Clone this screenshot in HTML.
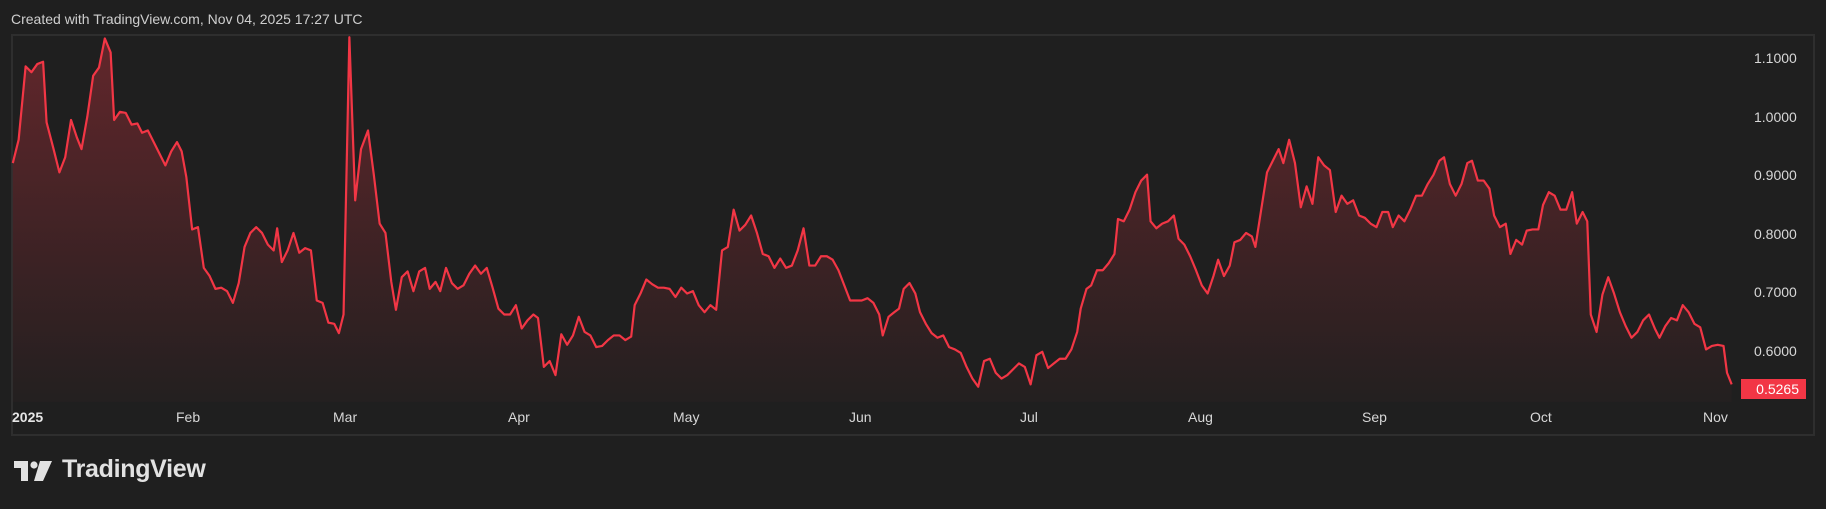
<!DOCTYPE html>
<html><head><meta charset="utf-8"><style>
html,body{margin:0;padding:0;background:#1f1f1f;}
body{width:1826px;height:509px;position:relative;overflow:hidden;font-family:"Liberation Sans",sans-serif;color:#d1d4dc;}
.t{position:absolute;white-space:nowrap;}
.hdr{left:11px;top:11px;font-size:14px;color:#cfcfcf;}
.frame{position:absolute;left:11px;top:34px;width:1800px;height:398px;border:2px solid #2e2e2e;}
.yl{position:absolute;left:1754px;font-size:14px;color:#d7d7d7;}
.xl{position:absolute;top:409px;font-size:14px;color:#d7d7d7;}
.price{position:absolute;left:1741px;top:379px;width:65px;height:20px;background:#f23645;color:#fff;font-size:14px;line-height:20px;text-align:right;box-sizing:border-box;padding-right:7px;}
.logo{position:absolute;left:62px;top:455px;font-size:25px;font-weight:bold;color:#e2e2e2;letter-spacing:-0.3px;}
</style></head><body>
<div class="t hdr">Created with TradingView.com, Nov 04, 2025 17:27 UTC</div>
<div class="frame"></div>
<svg style="position:absolute;left:0;top:0" width="1826" height="509" viewBox="0 0 1568 437" preserveAspectRatio="none">
<defs><linearGradient id="g" x1="0" y1="0" x2="0" y2="1"><stop offset="0" stop-color="#f23645" stop-opacity="0.32"/><stop offset="1" stop-color="#f23645" stop-opacity="0.02"/></linearGradient></defs>
<path id="p" fill="url(#g)" stroke="none" d="M11,345 L11,140 16,120 22,57 27,62 32,55 37,53 40,105 46,128 51,148 56,135 61,103 66,118 70,128 75,100 80,65 85,58 90,33 95,45 98,103 103,96 108,97 113,107 118,106 122,114 127,112 132,122 137,132 142,142 147,130 152,122 156,130 160,152 165,197 170,195 175,230 180,237 185,248 190,247 195,250 200,260 205,243 210,212 215,200 220,195 225,200 230,210 235,215 238,196 242,225 247,215 252,200 257,217 262,213 267,215 272,258 277,260 282,277 287,278 291,286 295,270 300,32 305,172 310,128 316,112 321,150 326,192 331,200 336,242 340,266 345,238 350,233 355,250 360,233 365,230 369,248 374,242 378,250 383,230 388,243 393,248 398,245 403,235 408,228 413,235 418,230 423,247 428,265 433,270 438,270 443,262 448,282 453,275 458,270 462,273 467,315 472,310 477,322 482,287 487,296 492,288 497,272 502,285 507,288 512,298 517,297 522,292 527,288 532,288 537,292 542,289 545,262 550,252 555,240 560,244 565,247 570,247 575,248 580,255 585,247 590,252 595,250 600,262 605,268 610,262 615,266 620,215 625,212 630,180 635,198 640,193 645,185 650,200 655,218 660,220 665,230 670,222 675,230 680,228 685,215 690,196 695,228 700,228 705,220 710,220 715,223 720,232 725,245 730,258 735,258 740,258 745,256 750,260 755,270 758,288 763,272 768,268 772,265 776,248 781,243 786,252 790,268 795,278 800,286 805,290 810,288 815,298 820,300 825,303 830,315 835,325 840,332 845,310 850,308 855,320 860,325 865,322 870,317 875,312 880,315 885,330 890,305 895,302 900,316 905,312 910,308 915,308 920,300 925,285 928,265 933,248 937,245 942,232 947,232 952,226 957,218 960,188 965,190 970,180 975,165 980,155 985,150 988,190 993,196 998,192 1003,190 1008,185 1012,205 1017,210 1022,220 1027,232 1032,245 1037,252 1042,237 1046,223 1051,237 1056,228 1060,208 1065,206 1070,200 1075,203 1078,212 1083,180 1088,148 1093,138 1098,128 1102,140 1107,120 1112,140 1117,178 1122,160 1127,175 1132,135 1137,142 1142,146 1147,182 1152,168 1157,175 1162,172 1167,185 1172,187 1177,192 1182,195 1187,182 1192,182 1196,195 1201,185 1206,190 1211,180 1216,168 1221,168 1226,158 1231,150 1236,138 1240,135 1245,158 1250,168 1255,158 1260,140 1264,138 1269,155 1274,155 1279,162 1283,185 1288,195 1293,192 1297,218 1302,206 1307,210 1311,198 1316,197 1321,197 1325,176 1330,165 1335,168 1340,180 1345,180 1350,165 1354,192 1359,182 1363,190 1366,270 1371,285 1376,253 1381,238 1386,252 1391,268 1396,280 1401,290 1406,285 1411,275 1416,270 1421,282 1425,290 1430,280 1435,273 1440,275 1445,262 1450,268 1455,278 1460,281 1465,300 1470,297 1475,296 1480,297 1483,320 1487,330 L1487,345 Z"/>
<polyline fill="none" stroke="#f23645" stroke-width="2.2" vector-effect="non-scaling-stroke" stroke-linejoin="round" points="11,140 16,120 22,57 27,62 32,55 37,53 40,105 46,128 51,148 56,135 61,103 66,118 70,128 75,100 80,65 85,58 90,33 95,45 98,103 103,96 108,97 113,107 118,106 122,114 127,112 132,122 137,132 142,142 147,130 152,122 156,130 160,152 165,197 170,195 175,230 180,237 185,248 190,247 195,250 200,260 205,243 210,212 215,200 220,195 225,200 230,210 235,215 238,196 242,225 247,215 252,200 257,217 262,213 267,215 272,258 277,260 282,277 287,278 291,286 295,270 300,32 305,172 310,128 316,112 321,150 326,192 331,200 336,242 340,266 345,238 350,233 355,250 360,233 365,230 369,248 374,242 378,250 383,230 388,243 393,248 398,245 403,235 408,228 413,235 418,230 423,247 428,265 433,270 438,270 443,262 448,282 453,275 458,270 462,273 467,315 472,310 477,322 482,287 487,296 492,288 497,272 502,285 507,288 512,298 517,297 522,292 527,288 532,288 537,292 542,289 545,262 550,252 555,240 560,244 565,247 570,247 575,248 580,255 585,247 590,252 595,250 600,262 605,268 610,262 615,266 620,215 625,212 630,180 635,198 640,193 645,185 650,200 655,218 660,220 665,230 670,222 675,230 680,228 685,215 690,196 695,228 700,228 705,220 710,220 715,223 720,232 725,245 730,258 735,258 740,258 745,256 750,260 755,270 758,288 763,272 768,268 772,265 776,248 781,243 786,252 790,268 795,278 800,286 805,290 810,288 815,298 820,300 825,303 830,315 835,325 840,332 845,310 850,308 855,320 860,325 865,322 870,317 875,312 880,315 885,330 890,305 895,302 900,316 905,312 910,308 915,308 920,300 925,285 928,265 933,248 937,245 942,232 947,232 952,226 957,218 960,188 965,190 970,180 975,165 980,155 985,150 988,190 993,196 998,192 1003,190 1008,185 1012,205 1017,210 1022,220 1027,232 1032,245 1037,252 1042,237 1046,223 1051,237 1056,228 1060,208 1065,206 1070,200 1075,203 1078,212 1083,180 1088,148 1093,138 1098,128 1102,140 1107,120 1112,140 1117,178 1122,160 1127,175 1132,135 1137,142 1142,146 1147,182 1152,168 1157,175 1162,172 1167,185 1172,187 1177,192 1182,195 1187,182 1192,182 1196,195 1201,185 1206,190 1211,180 1216,168 1221,168 1226,158 1231,150 1236,138 1240,135 1245,158 1250,168 1255,158 1260,140 1264,138 1269,155 1274,155 1279,162 1283,185 1288,195 1293,192 1297,218 1302,206 1307,210 1311,198 1316,197 1321,197 1325,176 1330,165 1335,168 1340,180 1345,180 1350,165 1354,192 1359,182 1363,190 1366,270 1371,285 1376,253 1381,238 1386,252 1391,268 1396,280 1401,290 1406,285 1411,275 1416,270 1421,282 1425,290 1430,280 1435,273 1440,275 1445,262 1450,268 1455,278 1460,281 1465,300 1470,297 1475,296 1480,297 1483,320 1487,330"/>
</svg>
<div class="yl" style="top:50px">1.1000</div>
<div class="yl" style="top:109px">1.0000</div>
<div class="yl" style="top:167px">0.9000</div>
<div class="yl" style="top:226px">0.8000</div>
<div class="yl" style="top:284px">0.7000</div>
<div class="yl" style="top:343px">0.6000</div>
<div class="price">0.5265</div>
<div class="xl" style="left:12px;font-weight:bold;color:#e6e6e6">2025</div>
<div class="xl" style="left:176px">Feb</div>
<div class="xl" style="left:333px">Mar</div>
<div class="xl" style="left:508px">Apr</div>
<div class="xl" style="left:673px">May</div>
<div class="xl" style="left:849px">Jun</div>
<div class="xl" style="left:1020px">Jul</div>
<div class="xl" style="left:1188px">Aug</div>
<div class="xl" style="left:1362px">Sep</div>
<div class="xl" style="left:1530px">Oct</div>
<div class="xl" style="left:1703px">Nov</div>
<svg style="position:absolute;left:14px;top:461px" width="40" height="20" viewBox="0 0 40 20">
<path d="M0 0H14V20H7V7H0Z" fill="#e2e2e2"/>
<circle cx="20" cy="4" r="3.6" fill="#e2e2e2"/>
<path d="M26 0H38L29 20H20Z" fill="#e2e2e2"/>
</svg>
<div class="t logo">TradingView</div>
</body></html>
